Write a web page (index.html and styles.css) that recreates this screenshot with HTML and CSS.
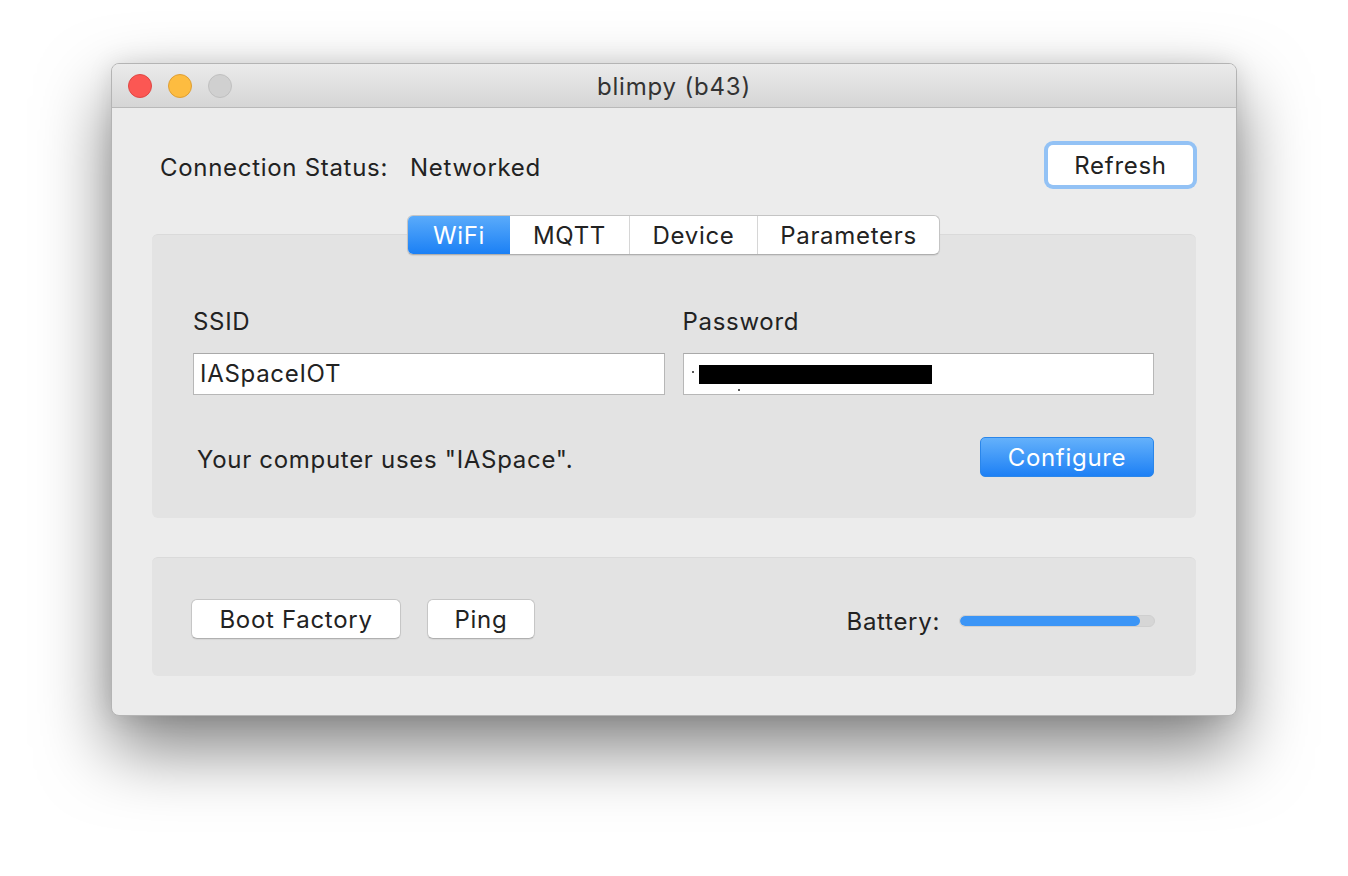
FILE: index.html
```html
<!DOCTYPE html>
<html>
<head>
<meta charset="utf-8">
<title>blimpy (b43)</title>
<link rel="stylesheet" href="styles.css">
</head>
<body>
<div class="window">
  <div class="titlebar">
    <div class="lights">
      <span class="light red"></span>
      <span class="light yellow"></span>
      <span class="light gray"></span>
    </div>
    <div class="title">blimpy (b43)</div>
    <div class="spacer"></div>
  </div>
  <div class="content">
    <div class="status-row">
      <div class="status">
        <span class="status-label">Connection Status:</span>
        <span class="status-value">Networked</span>
      </div>
      <div class="focus-ring"><button class="btn refresh">Refresh</button></div>
    </div>
    <div class="tabview">
      <div class="segments">
        <span class="seg selected seg-wifi">WiFi</span>
        <span class="seg seg-mqtt">MQTT</span>
        <span class="seg seg-device">Device</span>
        <span class="seg seg-params">Parameters</span>
      </div>
      <div class="box tabbox">
        <div class="fields">
          <div class="field">
            <div class="label">SSID</div>
            <div class="input">IASpaceIOT</div>
          </div>
          <div class="field">
            <div class="label">Password</div>
            <div class="input pw">
              <span class="dot dot1"></span>
              <span class="redact"></span>
              <span class="dot dot2"></span>
            </div>
          </div>
        </div>
        <div class="config-row">
          <span class="hint">Your computer uses "IASpace".</span>
          <button class="btn primary">Configure</button>
        </div>
      </div>
    </div>
    <div class="box bottombox">
      <div class="left-btns">
        <button class="btn plain boot">Boot Factory</button>
        <button class="btn plain ping">Ping</button>
      </div>
      <div class="battery">
        <span class="battery-label">Battery:</span>
        <div class="bar"><div class="fill" style="width:93%"></div></div>
      </div>
    </div>
  </div>
</div>
</body>
</html>
```
FILE: styles.css
```css
* { box-sizing: border-box; }
html, body { margin: 0; padding: 0; background: #ffffff; }
body {
  width: 1348px;
  height: 876px;
  padding: 63px 0 0 111px;
  font-family: Inter, "Liberation Sans", sans-serif;
  letter-spacing: 0.7px;
  color: #222222;
  overflow: hidden;
}
.window {
  width: 1126px;
  height: 653px;
  background: #ececec;
  border-radius: 8px;
  border: 1px solid #b4b4b4;
  box-shadow: 0 32px 70px rgba(0,0,0,0.50), 0 0 24px rgba(0,0,0,0.10);
  overflow: hidden;
  display: flex;
  flex-direction: column;
}
.titlebar {
  height: 44px;
  flex: none;
  background: linear-gradient(#ebebeb, #d5d5d5);
  border-bottom: 1px solid #b9b9b9;
  display: grid;
  grid-template-columns: 1fr auto 1fr;
  align-items: center;
}
.lights { display: flex; gap: 16px; padding-left: 16px; padding-top: 1px; }
.light {
  width: 24px; height: 24px; border-radius: 50%;
  display: block;
}
.red { background: #fc5753; border: 1px solid #df4744; }
.yellow { background: #fdbc40; border: 1px solid #de9f34; }
.gray { background: #d0d0d0; border: 1px solid #c0c0c0; }
.title {
  font-size: 24px;
  color: #333333;
  letter-spacing: 0.8px;
  padding-top: 2px;
}
.content {
  flex: 1;
  padding: 33px 40px 0 40px;
}
.status-row {
  height: 48px;
  display: flex;
  align-items: center;
  justify-content: space-between;
}
.status { padding-left: 8px; font-size: 24px; display: flex; gap: 22px; padding-top: 4px; }
.btn {
  font-family: Inter, "Liberation Sans", sans-serif;
  font-size: 24px;
  letter-spacing: 0.7px;
  color: #222222;
  border: none;
  padding: 0;
  margin: 0;
}
.focus-ring {
  padding: 4px;
  border-radius: 9px;
  background: #93c2f5;
  margin-right: -1px;
}
.refresh {
  width: 145px; height: 40px;
  background: #ffffff;
  border-radius: 5px;
  display: block;
}
.tabview { margin-top: 26px; }
.segments {
  position: relative;
  z-index: 1;
  width: 533px;
  height: 40px;
  margin: 0 0 -21px 255px;
  display: flex;
  background: #ffffff;
  border: 1px solid #c4c4c4;
  border-bottom-color: #afafaf;
  border-radius: 6px;
  box-shadow: 0 1px 1px rgba(0,0,0,0.08);
  overflow: hidden;
}
.seg {
  font-size: 24px;
  display: flex;
  align-items: center;
  justify-content: center;
  border-left: 1px solid #d6d6d6;
}
.seg-wifi { width: 102px; border-left: none; }
.seg-mqtt { width: 119px; border-left: none; }
.seg-device { width: 128px; }
.seg-params { flex: 1; }
.seg.selected {
  background: linear-gradient(#5aabfb, #1b80f5);
  color: #ffffff;
}
.box {
  background: #e3e3e3;
  border-radius: 6px;
  border-top: 1px solid #dadada;
}
.tabbox {
  height: 284px;
  padding: 72px 42px 0 41px;
}
.fields { display: flex; gap: 18px; }
.field { width: 472px; }
.label { font-size: 24px; height: 30px; line-height: 30px; margin-bottom: 16px; }
.input {
  height: 42px;
  background: #ffffff;
  border: 1px solid #b7b7b7;
  border-top-color: #a9a9a9;
  font-size: 24px;
  line-height: 40px;
  padding-left: 6px;
  position: relative;
}
.redact {
  position: absolute;
  left: 15px; top: 11px;
  width: 233px; height: 19px;
  background: #000000;
}
.dot { position: absolute; width: 2px; height: 2px; background: #222; border-radius: 50%; }
.dot1 { left: 8px; top: 17px; }
.dot2 { left: 54px; top: 35px; }
.config-row {
  margin-top: 42px;
  display: flex;
  align-items: center;
  justify-content: space-between;
}
.hint { font-size: 24px; padding-left: 4px; padding-top: 4px; }
.primary {
  width: 174px; height: 40px;
  border-radius: 5px;
  background: linear-gradient(#64b1fb, #1d80f5);
  border: 1px solid #2a86ea;
  color: #ffffff;
}
.bottombox {
  margin-top: 39px;
  height: 119px;
  padding: 41px 41px 0 39px;
  display: flex;
  justify-content: space-between;
}
.left-btns { display: flex; gap: 26px; height: 40px; }
.plain {
  height: 40px;
  background: #ffffff;
  border: 1px solid #c6c6c6;
  border-bottom-color: #b0b0b0;
  border-radius: 6px;
  box-shadow: 0 1px 1px rgba(0,0,0,0.06);
}
.boot { width: 210px; }
.ping { width: 108px; }
.battery { display: flex; align-items: center; height: 44px; gap: 19px; }
.battery-label { font-size: 24px; }
.bar {
  width: 196px; height: 12px;
  background: #d6d6d6;
  border-radius: 6px;
  overflow: hidden;
  border: 1px solid #cfcfcf;
}
.fill { height: 100%; background: #3b95f6; border-radius: 6px; }
```
